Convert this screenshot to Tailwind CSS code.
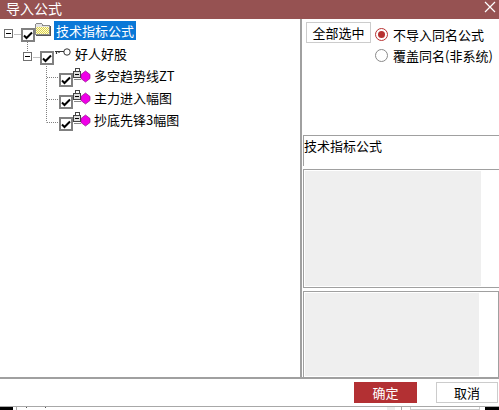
<!DOCTYPE html>
<html><head><meta charset="utf-8"><script src="https://cdn.jsdelivr.net/npm/@tailwindcss/browser@4"></script></head>
<body class="bg-white">
<div class="relative flex h-[410px] w-[499px] flex-col overflow-hidden bg-white text-[13px] leading-[17px] text-black [font-family:'Noto_Sans_CJK_SC','Liberation_Sans',sans-serif]">
  <div class="flex h-[19px] shrink-0 justify-between bg-[#965252] pl-[6px] pr-[3px] text-white">
    <span class="text-[14px] leading-[17px]">导入公式</span>
    <svg width="12" height="12" viewBox="0 0 12 12" class="mt-[1px]"><path d="M1 1 11 11M11 1 1 11" stroke="#fff" stroke-width="1.2"/></svg>
  </div>
  <div class="flex h-[360px] shrink-0 border-b-2 border-[#a0a0a0]">
    <div class="relative w-[302px] shrink-0 border-r-2 border-[#a0a0a0]">
      <svg width="100" height="110" class="absolute left-0 top-0" fill="none" stroke="#808080" stroke-dasharray="1 1">
        <path d="M14.500 15.500H21M27.500 23V32M33.500 38.500H40M46.500 45V103.500M47 58.500H59M47 80.500H59M47 103.500H59"/>
      </svg>
      <div class="absolute left-[4px] top-[10px] h-[9px] w-[9px] border border-[#707070]"><div class="mx-auto mt-[3px] h-px w-[5px] bg-black"></div></div>
      <div class="absolute left-[23px] top-[33px] h-[9px] w-[9px] border border-[#707070]"><div class="mx-auto mt-[3px] h-px w-[5px] bg-black"></div></div>
      <div class="absolute left-[21px] top-[9px] flex h-[14px] w-[14px] items-center justify-center border-2 border-[#808080] bg-white"><svg width="10" height="9" viewBox="0 0 10 9"><path d="M1 4.500 3.500 7 9 1.500" fill="none" stroke="#000" stroke-width="2"/></svg></div>
      <div class="absolute left-[40px] top-[32px] flex h-[14px] w-[14px] items-center justify-center border-2 border-[#808080] bg-white"><svg width="10" height="9" viewBox="0 0 10 9"><path d="M1 4.500 3.500 7 9 1.500" fill="none" stroke="#000" stroke-width="2"/></svg></div>
      <div class="absolute left-[59px] top-[54px] flex h-[14px] w-[14px] items-center justify-center border-2 border-[#808080] bg-white"><svg width="10" height="9" viewBox="0 0 10 9"><path d="M1 4.500 3.500 7 9 1.500" fill="none" stroke="#000" stroke-width="2"/></svg></div>
      <div class="absolute left-[59px] top-[76px] flex h-[14px] w-[14px] items-center justify-center border-2 border-[#808080] bg-white"><svg width="10" height="9" viewBox="0 0 10 9"><path d="M1 4.500 3.500 7 9 1.500" fill="none" stroke="#000" stroke-width="2"/></svg></div>
      <div class="absolute left-[59px] top-[98px] flex h-[14px] w-[14px] items-center justify-center border-2 border-[#808080] bg-white"><svg width="10" height="9" viewBox="0 0 10 9"><path d="M1 4.500 3.500 7 9 1.500" fill="none" stroke="#000" stroke-width="2"/></svg></div>
      <svg width="16" height="13" viewBox="0 0 16 13" class="absolute left-[35px] top-[4px]" shape-rendering="crispEdges"><defs><pattern id="d" width="2" height="2" patternUnits="userSpaceOnUse"><rect width="2" height="2" fill="#ffffd0"/><rect width="1" height="1" fill="#dccf50"/><rect x="1" y="1" width="1" height="1" fill="#dccf50"/></pattern></defs><path d="M.5 11.500V1.500L1.500 .5H6.500L8 2.500H14.500V11.500Z" fill="#e4e4e4" stroke="#8a8a8a"/><rect x="1" y="4" width="13" height="7" fill="url(#d)"/><path d="M15.500 3V12.500H1" fill="none" stroke="#555"/></svg>
      <svg width="16" height="8" viewBox="0 0 16 8" class="absolute left-[55px] top-[29px]"><circle cx="12" cy="4" r="3.200" fill="#fff" stroke="#333"/><path d="M0 3.500H9M1.500 3.500V6M4 3.500V5" stroke="#333" stroke-width="1.200" fill="none"/></svg>
      <svg width="18" height="15" viewBox="0 0 18 15" class="absolute left-[73px] top-[49px]" shape-rendering="crispEdges"><path d="M2.500 4V.5H6.500V4" fill="none" stroke="#444"/><rect x=".5" y="3.500" width="7" height="6" fill="#ddd" stroke="#444"/><path d="M2 6.500H6" stroke="#000"/><path d="M1 11.500H8" stroke="#888"/><path d="M12.500 3 17 6.500V10.500L12.500 14 8 10.500V6.500Z" fill="#f000e8" stroke="#90108c" stroke-width=".7" shape-rendering="auto"/></svg>
      <svg width="18" height="15" viewBox="0 0 18 15" class="absolute left-[73px] top-[71px]" shape-rendering="crispEdges"><path d="M2.500 4V.5H6.500V4" fill="none" stroke="#444"/><rect x=".5" y="3.500" width="7" height="6" fill="#ddd" stroke="#444"/><path d="M2 6.500H6" stroke="#000"/><path d="M1 11.500H8" stroke="#888"/><path d="M12.500 3 17 6.500V10.500L12.500 14 8 10.500V6.500Z" fill="#f000e8" stroke="#90108c" stroke-width=".7" shape-rendering="auto"/></svg>
      <svg width="18" height="15" viewBox="0 0 18 15" class="absolute left-[73px] top-[93px]" shape-rendering="crispEdges"><path d="M2.500 4V.5H6.500V4" fill="none" stroke="#444"/><rect x=".5" y="3.500" width="7" height="6" fill="#ddd" stroke="#444"/><path d="M2 6.500H6" stroke="#000"/><path d="M1 11.500H8" stroke="#888"/><path d="M12.500 3 17 6.500V10.500L12.500 14 8 10.500V6.500Z" fill="#f000e8" stroke="#90108c" stroke-width=".7" shape-rendering="auto"/></svg>
      <span class="absolute left-[54px] top-[2px] bg-[#0a78d7] px-[2px] py-px text-white">技术指标公式</span>
      <span class="absolute left-[75px] top-[26px]">好人好股</span>
      <span class="absolute left-[94px] top-[48px]">多空趋势线ZT</span>
      <span class="absolute left-[94px] top-[70px]">主力进入幅图</span>
      <span class="absolute left-[94px] top-[92px]">抄底先锋3幅图</span>
    </div>
    <div class="flex min-w-0 flex-1 flex-col pl-[1px]">
      <div class="flex h-[116px] shrink-0 pl-[3px] pt-[3px]">
        <button class="h-[21px] w-[65px] shrink-0 border border-[#cccccc] text-[13px]">全部选中</button>
        <div class="ml-[4px] flex flex-col gap-[4px] pt-[4px]">
          <div class="flex items-center gap-[5px]"><span class="flex h-[13px] w-[13px] items-center justify-center rounded-full border border-[#b83232]"><span class="h-[7px] w-[7px] rounded-full bg-[#b83232]"></span></span><span>不导入同名公式</span></div>
          <div class="flex items-center gap-[5px]"><span class="h-[13px] w-[13px] rounded-full border border-[#8a8a8a]"></span><span>覆盖同名(非系统)</span></div>
        </div>
      </div>
      <div class="h-[31px] shrink-0 border-t border-l border-[#a0a0a0] pt-[1px] text-[13px]">技术指标公式</div>
      <div class="mt-[3px] h-[119px] shrink-0 border border-r-0 border-[#a0a0a0] p-px"><div class="h-[115px] w-[176px] bg-[#efefef]"></div></div>
      <div class="mt-[3px] flex-1 border-[1.5px] border-b-0 border-[#a0a0a0] p-px"><div class="h-[83px] w-[174px] bg-[#efefef]"></div></div>
    </div>
  </div>
  <div class="flex h-[27px] shrink-0 items-start justify-end pr-[1px] pt-[3px]">
    <button class="h-[21px] w-[63px] bg-[#b33033] text-[13px] text-white">确定</button>
    <button class="ml-[19px] h-[21px] w-[62px] border border-[#cccccc] text-[13px]">取消</button>
  </div>
  <div class="flex flex-1 border-t border-[#a8a8a8] bg-white">
    <div class="h-full w-[13px] bg-black"></div>
    <div class="ml-[3px] h-full w-px bg-[#a8a8a8]"></div>
    <div class="ml-[9px] h-px w-px bg-[#555]"></div>
    <div class="ml-[18px] h-px w-px bg-[#555]"></div>
    <div class="ml-[341px] h-full w-[8px] bg-[#eeeeee]"></div>
    <div class="ml-[6px] h-full w-px bg-[#a8a8a8]"></div>
    <div class="ml-[8px] h-full w-[70px] border-x border-b border-[#cccccc]"></div>
    <div class="ml-[5px] h-full flex-1 bg-black"></div>
  </div>
</div>
</body></html>
